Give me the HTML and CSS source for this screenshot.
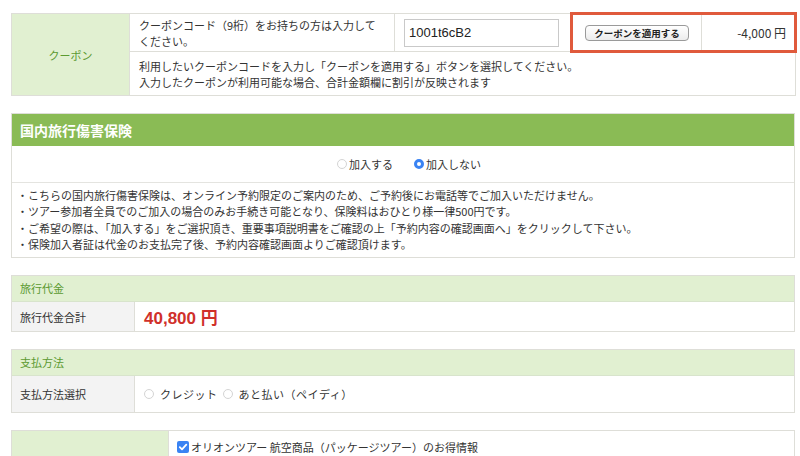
FILE: index.html
```html
<!DOCTYPE html>
<html lang="ja">
<head>
  <meta charset="UTF-8" />
  <meta name="viewport" content="width=device-width, initial-scale=1.0"/>
  <title>お申込み内容</title>
  <link rel="stylesheet" href="styles.css">
</head>
<body>
  <div class="page">

    <table class="coupon">
      <colgroup>
        <col class="col-label">
        <col class="col-note">
        <col class="col-input">
        <col class="col-apply">
        <col class="col-amount">
      </colgroup>
      <tr class="coupon-top">
        <th rowspan="2" class="coupon-label">クーポン</th>
        <td class="coupon-note">クーポンコード（9桁）をお持ちの方は入力してください。</td>
        <td class="coupon-input"><input type="text" value="1001t6cB2"></td>
        <td class="coupon-apply"><button type="button">クーポンを適用する</button></td>
        <td class="coupon-amount">-4,000 円</td>
      </tr>
      <tr>
        <td colspan="4" class="coupon-help">
          利用したいクーポンコードを入力し「クーポンを適用する」ボタンを選択してください。<br>
          入力したクーポンが利用可能な場合、合計金額欄に割引が反映されます
        </td>
      </tr>
    </table>

    <div class="section insurance">
      <div class="insurance-head">国内旅行傷害保険</div>
      <div class="insurance-choice">
        <label class="choice"><span class="radio"></span>加入する</label>
        <label class="choice"><span class="radio is-checked"></span>加入しない</label>
      </div>
      <ul class="insurance-notes">
        <li>・こちらの国内旅行傷害保険は、オンライン予約限定のご案内のため、ご予約後にお電話等でご加入いただけません。</li>
        <li>・ツアー参加者全員でのご加入の場合のみお手続き可能となり、保険料はおひとり様一律500円です。</li>
        <li>・ご希望の際は、「加入する」をご選択頂き、重要事項説明書をご確認の上「予約内容の確認画面へ」をクリックして下さい。</li>
        <li>・保険加入者証は代金のお支払完了後、予約内容確認画面よりご確認頂けます。</li>
      </ul>
    </div>

    <div class="section">
      <div class="section-head">旅行代金</div>
      <div class="row row-price">
        <div class="row-label">旅行代金合計</div>
        <div class="row-value"><span class="total">40,800 円</span></div>
      </div>
    </div>

    <div class="section">
      <div class="section-head">支払方法</div>
      <div class="row row-pay">
        <div class="row-label">支払方法選択</div>
        <div class="row-value">
          <label class="pay"><span class="radio"></span>クレジット</label>
          <label class="pay"><span class="radio"></span>あと払い（ペイディ）</label>
        </div>
      </div>
    </div>

    <div class="section">
      <div class="row row-mail">
        <div class="row-label mail-label"></div>
        <div class="row-value mail-value">
          <label class="check">
            <span class="checkbox">
              <svg viewBox="0 0 12 12" width="12" height="12"><path d="M2.8 6.2 5 8.4 9.3 3.6" fill="none" stroke="#fff" stroke-width="1.8" stroke-linecap="round" stroke-linejoin="round"/></svg>
            </span>オリオンツアー 航空商品（パッケージツアー）のお得情報
          </label>
        </div>
      </div>
    </div>

  </div>
</body>
</html>
```

FILE: styles.css
```css
* {
  box-sizing: border-box;
}

body {
  margin: 0;
  background: #fff;
  color: #333;
  font-family: "Noto Sans CJK JP", "Liberation Sans", sans-serif;
  font-size: 11px;
}

.page {
  width: 784px;
  margin-left: 11px;
  padding-top: 12px;
}

/* coupon */

.coupon {
  width: 784px;
  border-collapse: collapse;
  table-layout: fixed;
}

.col-label { width: 118px; }
.col-note { width: 265px; }
.col-input { width: 177px; }
.col-apply { width: 130px; }
.col-amount { width: 94px; }

.coupon th,
.coupon td {
  border: 1px solid #deded8;
  padding: 0 9px;
  line-height: 16px;
  font-weight: normal;
  text-align: left;
}

.coupon-top {
  height: 38px;
}

.coupon .coupon-label {
  background: #e1f0d1;
  color: #5c9a32;
  text-align: center;
}

.coupon-input input {
  width: 155px;
  height: 28px;
  border: 1px solid #c9c9c9;
  padding: 0 4px;
  font-family: "Liberation Sans", sans-serif;
  font-size: 13px;
  color: #222;
}

.coupon .coupon-apply {
  border-top: 3px solid #e05a3c;
  border-bottom: 3px solid #e05a3c;
  border-left: 3px solid #e05a3c;
  text-align: center;
}

.coupon .coupon-amount {
  border-top: 3px solid #e05a3c;
  border-bottom: 3px solid #e05a3c;
  border-right: 3px solid #e05a3c;
  text-align: right;
  padding-right: 8px;
  font-size: 12px;
}

.coupon-apply button {
  width: 104px;
  height: 16px;
  padding: 0;
  border: 1px solid #9a9a9a;
  border-radius: 4px;
  background: linear-gradient(#ffffff, #ececec);
  font-family: inherit;
  font-size: 9.5px;
  font-weight: bold;
  color: #222;
  line-height: 14px;
}

.coupon .coupon-help {
  height: 44px;
  padding-top: 4px;
  padding-bottom: 4px;
}

/* sections */

.section {
  margin-top: 17px;
  border: 1px solid #deded8;
}

.insurance-head {
  height: 32px;
  background: #8abb55;
  color: #fff;
  font-size: 14px;
  font-weight: bold;
  line-height: 32px;
  padding-left: 8px;
}

.insurance-choice {
  display: flex;
  justify-content: center;
  gap: 21px;
  height: 37px;
  align-items: center;
  padding-left: 12px;
  border-bottom: 1px solid #e4e4e0;
  font-size: 11px;
}

.choice {
  display: flex;
  align-items: center;
}

.radio {
  display: inline-block;
  width: 10px;
  height: 10px;
  margin-right: 2px;
  border: 1px solid #d4d4d4;
  border-radius: 50%;
  background: #fff;
}

.radio.is-checked {
  border: 3px solid #3a83f3;
  background: #fff;
}

.insurance-notes {
  list-style: none;
  margin: 0;
  padding: 4px 5px 5px;
  line-height: 16.3px;
}

.section-head {
  height: 26px;
  background: #e1f0d1;
  border-bottom: 1px solid #d8e4cc;
  color: #5c9a32;
  line-height: 25px;
  padding-left: 8px;
}

.row {
  display: flex;
}

.row-label {
  width: 123px;
  background: #f3f3f3;
  border-right: 1px solid #deded8;
  padding-left: 8px;
  display: flex;
  align-items: center;
}

.row-value {
  flex: 1;
  display: flex;
  align-items: center;
  padding-left: 9px;
}

.row-price {
  height: 29px;
}

.total {
  color: #d0302a;
  font-size: 17px;
  font-weight: bold;
  font-family: "Liberation Sans", "Noto Sans CJK JP", sans-serif;
}

.row-pay {
  height: 36px;
}

.pay {
  display: flex;
  align-items: center;
  margin-right: 5px;
  letter-spacing: 0.5px;
}

.pay .radio {
  margin-right: 6px;
}

.row-mail {
  min-height: 40px;
}

.mail-label {
  width: 157px;
  background: #e1f0d1;
}

.mail-value {
  flex-direction: column;
  align-items: flex-start;
  padding: 8px 0 8px 8px;
}

.check {
  display: flex;
  align-items: center;
}

.checkbox {
  display: inline-flex;
  width: 12px;
  height: 12px;
  margin-right: 2px;
  border-radius: 2px;
  background: #3a83f3;
}
```
